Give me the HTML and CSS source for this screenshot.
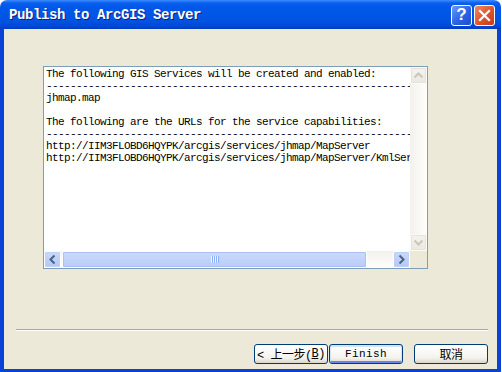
FILE: index.html
```html
<!DOCTYPE html>
<html>
<head>
<title>Publish to ArcGIS Server</title>
<link rel="stylesheet" href="styles.css">
</head>
<body>
<div class="window">
  <div class="titlebar">
    <span class="title">Publish to ArcGIS Server</span>
    <div class="caption-buttons">
      <span class="cap-btn help">?</span>
      <span class="cap-btn close">
        <svg width="19" height="19" viewBox="0 0 19 19"><path d="M5 5 L14 14 M14 5 L5 14" stroke="#fff" stroke-width="2.2" stroke-linecap="square"/></svg>
      </span>
    </div>
  </div>

  <div class="client">
    <div class="textbox">
<pre class="text">The following GIS Services will be created and enabled:
----------------------------------------------------------------------------------
jhmap.map

The following are the URLs for the service capabilities:
----------------------------------------------------------------------------------
http://IIM3FLOBD6HQYPK/arcgis/services/jhmap/MapServer
http://IIM3FLOBD6HQYPK/arcgis/services/jhmap/MapServer/KmlServer</pre>

      <div class="vscroll">
        <span class="sb-btn disabled">
          <svg width="15" height="15" viewBox="0 0 15 15"><path d="M3.5 9.5 L7.5 5.5 L11.5 9.5" fill="none" stroke="#c9c7ba" stroke-width="2"/></svg>
        </span>
        <span class="vtrack"></span>
        <span class="sb-btn disabled">
          <svg width="15" height="15" viewBox="0 0 15 15"><path d="M3.5 5.5 L7.5 9.5 L11.5 5.5" fill="none" stroke="#c9c7ba" stroke-width="2"/></svg>
        </span>
      </div>

      <div class="hscroll">
        <span class="sb-btn">
          <svg width="15" height="15" viewBox="0 0 15 15"><path d="M9.5 3.5 L5.5 7.5 L9.5 11.5" fill="none" stroke="#4d6185" stroke-width="2"/></svg>
        </span>
        <span class="htrack">
          <span class="thumb"><span class="grip"></span></span>
        </span>
        <span class="sb-btn">
          <svg width="15" height="15" viewBox="0 0 15 15"><path d="M5.5 3.5 L9.5 7.5 L5.5 11.5" fill="none" stroke="#4d6185" stroke-width="2"/></svg>
        </span>
      </div>

      <div class="corner"></div>
    </div>

    <div class="separator"></div>

    <div class="buttons">
      <span class="btn">&lt; 上一步(<u>B</u>)</span>
      <span class="btn default">Finish</span>
      <span class="btn cancel">取消</span>
    </div>
  </div>
</div>
</body>
</html>
```

FILE: styles.css
```css
body {
  margin: 0;
  background: #ffffff;
  font-family: "Liberation Mono", "Noto Sans CJK SC", monospace;
}
.window {
  width: 501px;
  height: 372px;
  display: flex;
  flex-direction: column;
}
.titlebar {
  height: 29px;
  flex: none;
  display: flex;
  align-items: center;
  justify-content: space-between;
  padding: 0 6px 0 9px;
  border-radius: 7px 7px 0 0;
  background: linear-gradient(#3d8dff 0px, #0a5fee 3px, #0058e8 7px, #0054e3 20px, #0049d6 26px, #003dbd 29px);
}
.title {
  color: #ffffff;
  font-family: "Liberation Mono", monospace;
  font-weight: bold;
  font-size: 14px;
  letter-spacing: -0.4px;
  text-shadow: 1px 1px 0 #0a1e8c;
  padding-top: 1px;
}
.caption-buttons {
  display: flex;
  gap: 2px;
  padding-top: 1px;
}
.cap-btn {
  width: 19px;
  height: 19px;
  border: 1px solid #ffffff;
  border-radius: 3px;
  display: flex;
  align-items: center;
  justify-content: center;
}
.help {
  background: linear-gradient(135deg, #6a9cf7, #2a62e4 55%, #1d4fcf);
  color: #ffffff;
  font-family: "Liberation Sans", sans-serif;
  font-weight: bold;
  font-size: 17px;
}
.close {
  background: linear-gradient(135deg, #f08a64, #df5329 55%, #c83a17);
}
.client {
  flex: 1;
  background: #ece9d8;
  border: 4px solid #0842d6;
  border-top: none;
  border-bottom-width: 3px;
  padding: 37px 9px 0 39px;
  display: flex;
  flex-direction: column;
}
.textbox {
  width: 383px;
  height: 201px;
  border: 1px solid #7f9db9;
  background: #ffffff;
  display: grid;
  grid-template-columns: 1fr 17px;
  grid-template-rows: 1fr 17px;
}
.text {
  margin: 0;
  padding: 1px 0 0 2px;
  overflow: hidden;
  font-family: "Liberation Mono", monospace;
  font-size: 11px;
  letter-spacing: -0.6px;
  line-height: 12px;
  color: #000000;
}
.vscroll {
  display: flex;
  flex-direction: column;
  background: linear-gradient(90deg, #f3f1ec, #fefefb);
}
.vtrack {
  flex: 1;
}
.sb-btn {
  width: 17px;
  height: 17px;
  box-sizing: border-box;
  border: 1px solid #ffffff;
  border-radius: 2px;
  background: linear-gradient(#c9d8fc, #b4c8f6);
  box-shadow: inset 0 0 0 1px #bcd0f8;
  display: flex;
  align-items: center;
  justify-content: center;
}
.sb-btn.disabled {
  border-color: #fbfbf8;
  background: linear-gradient(#f4f3ee, #ebe9e0);
  box-shadow: inset 0 0 0 1px #e6e4da;
}
.hscroll {
  display: flex;
  background: linear-gradient(#f3f1ec, #fefefb);
}
.htrack {
  flex: 1;
  padding: 0 26px 0 1px;
  display: flex;
}
.thumb {
  flex: 1;
  border: 1px solid #ffffff;
  border-radius: 2px;
  background: linear-gradient(#cbdafc, #b9ccf8);
  box-shadow: inset 0 0 0 1px #a9c0f4;
  display: flex;
  align-items: center;
  justify-content: center;
}
.grip {
  width: 8px;
  height: 7px;
  background: repeating-linear-gradient(90deg, #eef4fe 0, #eef4fe 1px, #8cb0f8 1px, #8cb0f8 2px);
}
.corner {
  background: #ece9d8;
}
.separator {
  margin: 60px 0 0 -27px;
  height: 1px;
  border-top: 1px solid #aca899;
  background: #ffffff;
}
.buttons {
  margin-top: 13px;
  display: flex;
  justify-content: flex-end;
}
.btn {
  width: 74px;
  height: 20px;
  box-sizing: border-box;
  border: 1px solid #003c74;
  border-radius: 3px;
  background: linear-gradient(#ffffff, #f4f3ee 70%, #dcd7cb);
  display: flex;
  align-items: center;
  justify-content: center;
  font-family: "Liberation Mono", "Noto Sans CJK SC", monospace;
  font-size: 12px;
  letter-spacing: -0.5px;
  color: #000000;
}
.btn u {
  text-decoration: underline;
}
.btn.default {
  margin-left: 1px;
  font-size: 11px;
  letter-spacing: 0.4px;
  box-shadow: inset 0 1px 0 1px #cee7ff, inset 0 -1px 0 1px #6982ee;
}
.btn.cancel {
  margin-left: 11px;
}
```
